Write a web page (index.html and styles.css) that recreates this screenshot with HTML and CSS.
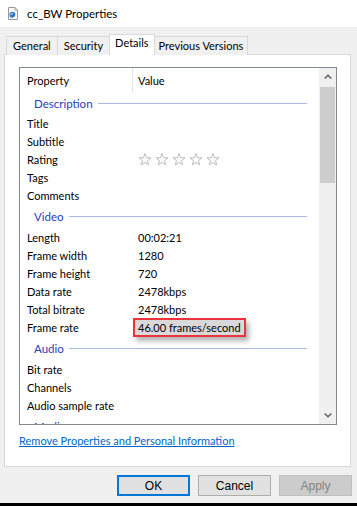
FILE: index.html
```html
<!DOCTYPE html>
<html lang="en">
<head>
  <meta charset="UTF-8">
  <title>cc_BW Properties</title>
  <link rel="stylesheet" href="styles.css">
</head>
<body>
  <div class="titlebar">
    <svg class="app-icon" width="12" height="13" viewBox="0 0 12 13">
      <path d="M1.5 0.5 H8 L10.5 3 V12.5 H1.5 Z" fill="#fafafa" stroke="#9a9a9a"/>
      <path d="M8 0.5 V3 H10.5" fill="#e6e6e6" stroke="#9a9a9a"/>
      <path d="M2.5 6.5 Q4 4 7 5 Q9 6 8 9 Q6.5 11.5 3.5 10.5 Q2 9.5 2.5 6.5 Z" fill="#2c78cf"/>
      <path d="M3.5 7 Q5 5.5 6.5 6.5 Q5 7.5 3.5 8.5 Z" fill="#9fd0f5"/>
    </svg>
    <span class="title">cc_BW Properties</span>
  </div>

  <div class="tabs">
    <div class="tab">General</div>
    <div class="tab">Security</div>
    <div class="tab active">Details</div>
    <div class="tab">Previous Versions</div>
  </div>

  <div class="panel">
    <div class="listbox">
      <div class="list">
        <div class="list-head">
          <div class="col-name">Property</div>
          <div class="col-value">Value</div>
        </div>

        <div class="group first">Description</div>
        <div class="row"><span class="name">Title</span><span class="value"></span></div>
        <div class="row"><span class="name">Subtitle</span><span class="value"></span></div>
        <div class="row">
          <span class="name">Rating</span>
          <span class="value">
            <svg class="stars" width="86" height="13" viewBox="0 0 86 13">
              <defs>
                <polygon id="star" points="6.5,0.5 8.03,4.7 12.49,4.85 8.97,7.6 10.2,11.9 6.5,9.4 2.8,11.9 4.03,7.6 0.51,4.85 4.97,4.7" fill="#fcfcfc" stroke="#bdbdbd" stroke-width="1"/>
              </defs>
              <use href="#star" x="0.5"/>
              <use href="#star" x="17.5"/>
              <use href="#star" x="34.5"/>
              <use href="#star" x="51.5"/>
              <use href="#star" x="68.5"/>
            </svg>
          </span>
        </div>
        <div class="row"><span class="name">Tags</span><span class="value"></span></div>
        <div class="row"><span class="name">Comments</span><span class="value"></span></div>

        <div class="group">Video</div>
        <div class="row"><span class="name">Length</span><span class="value">00:02:21</span></div>
        <div class="row"><span class="name">Frame width</span><span class="value">1280</span></div>
        <div class="row"><span class="name">Frame height</span><span class="value">720</span></div>
        <div class="row"><span class="name">Data rate</span><span class="value">2478kbps</span></div>
        <div class="row"><span class="name">Total bitrate</span><span class="value">2478kbps</span></div>
        <div class="row"><span class="name">Frame rate</span><span class="value"><span class="highlight">46.00 frames/second</span></span></div>

        <div class="group">Audio</div>
        <div class="row"><span class="name">Bit rate</span><span class="value"></span></div>
        <div class="row"><span class="name">Channels</span><span class="value"></span></div>
        <div class="row"><span class="name">Audio sample rate</span><span class="value"></span></div>

        <div class="group">Media</div>
      </div>

      <div class="scrollbar">
        <div class="sb-btn">
          <svg width="8" height="5" viewBox="0 0 8 5"><polyline points="0.7,4.5 4,1.2 7.3,4.5" fill="none" stroke="#606060" stroke-width="1.5"/></svg>
        </div>
        <div class="sb-track"><div class="thumb"></div></div>
        <div class="sb-btn">
          <svg width="8" height="5" viewBox="0 0 8 5"><polyline points="0.7,0.5 4,3.8 7.3,0.5" fill="none" stroke="#606060" stroke-width="1.5"/></svg>
        </div>
      </div>
    </div>

    <a href="#" class="remove-link">Remove Properties and Personal Information</a>
  </div>

  <div class="buttons">
    <button class="btn default">OK</button>
    <button class="btn">Cancel</button>
    <button class="btn disabled">Apply</button>
  </div>

  <div class="screen-edge"></div>
</body>
</html>
```

FILE: styles.css
```css
* {
  box-sizing: border-box;
}

body {
  margin: 0;
  width: 357px;
  height: 506px;
  overflow: hidden;
  background: #f0f0f0;
  font-family: Lato, "Liberation Sans", Arial, sans-serif;
  font-size: 11px;
  color: #000;
}

.titlebar {
  height: 27px;
  background: #fff;
  display: flex;
  align-items: center;
  padding-left: 7px;
}

.app-icon {
  margin-right: 8px;
}

.title {
  font-size: 11.5px;
}

.tabs {
  display: flex;
  align-items: flex-end;
  height: 28px;
  padding-left: 6px;
}

.tab {
  height: 19px;
  padding: 0 6px;
  line-height: 17px;
  background: #f0f0f0;
  border: 1px solid #d9d9d9;
  border-left: none;
  border-bottom: none;
}

.tab:first-child {
  border-left: 1px solid #d9d9d9;
}

.tab:last-child {
  padding: 0 4px;
}

.tab.active {
  height: 21px;
  padding: 0 5px;
  line-height: 16px;
  background: #fff;
  border-left: 1px solid #d9d9d9;
  margin-left: -1px;
  position: relative;
  z-index: 1;
}

.panel {
  margin: -1px 6px 0 4px;
  height: 413px;
  border: 1px solid #d9d9d9;
  background: #fff;
  padding: 12px 0 0 14px;
}

.listbox {
  width: 318px;
  height: 358px;
  border: 1px solid #828790;
  display: flex;
}

.list {
  flex: 1;
  overflow: hidden;
}

.list-head {
  display: flex;
  height: 25px;
  line-height: 25px;
}

.col-name {
  width: 113px;
  padding-left: 7px;
  border-right: 1px solid #e5e5e5;
}

.col-value {
  padding-left: 5px;
}

.group {
  display: flex;
  align-items: center;
  height: 21px;
  padding: 0 12px 0 14px;
  margin: 2px 0 1px;
  font-size: 11.5px;
  color: #2a3cb8;
}

.group.first {
  margin: 0;
}

.group::after {
  content: "";
  flex: 1;
  height: 1px;
  margin-left: 5px;
  background: #a9bce6;
}

.row {
  display: flex;
  align-items: center;
  height: 18px;
  white-space: nowrap;
}

.row .name {
  width: 118px;
  flex-shrink: 0;
  padding-left: 7px;
}

.stars {
  display: block;
}

.highlight {
  display: inline-block;
  margin-left: -5px;
  padding: 0 3px;
  line-height: 15px;
  border: 2px solid #e8343c;
  background: #d9d9d9;
  box-shadow: 3px 4px 5px rgba(0, 0, 0, 0.3);
}

.scrollbar {
  width: 17px;
  background: #f0f0f0;
  display: flex;
  flex-direction: column;
}

.sb-btn {
  height: 17px;
  display: flex;
  align-items: center;
  justify-content: center;
}

.sb-track {
  flex: 1;
}

.thumb {
  height: 96px;
  margin: 2px 1px 0;
  background: #cdcdcd;
}

.remove-link {
  display: inline-block;
  margin-top: 8px;
  line-height: 15px;
  color: #0066cc;
  text-decoration: underline;
}

.buttons {
  display: flex;
  justify-content: flex-end;
  gap: 8px;
  padding-right: 5px;
  margin-top: 8px;
}

.btn {
  width: 73px;
  height: 21px;
  padding: 0;
  font-family: "Liberation Sans", Arial, sans-serif;
  font-size: 12px;
  color: #000;
  background: #e1e1e1;
  border: 1px solid #adadad;
}

.btn.default {
  border: 2px solid #0078d7;
}

.btn.disabled {
  background: #cccccc;
  border-color: #bfbfbf;
  color: #838383;
}

.screen-edge {
  height: 3px;
  margin-top: 7px;
  background: #000;
}
```
